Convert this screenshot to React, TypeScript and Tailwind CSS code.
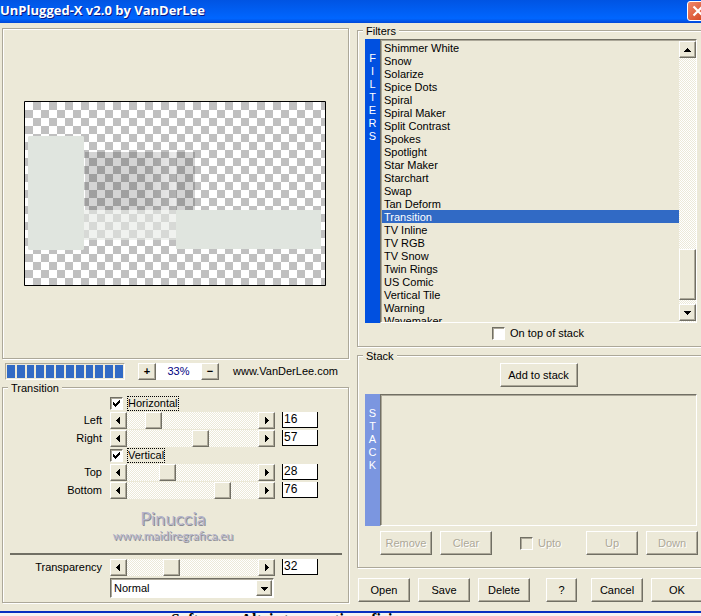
import { useState, type ReactNode } from "react";

const raised =
  "border border-t-white border-l-white border-r-[#716f64] border-b-[#716f64] shadow-[inset_-1px_-1px_0_#aca899] bg-[#ece9d8]";
const sunken =
  "border border-t-[#716f64] border-l-[#716f64] border-r-white border-b-white shadow-[inset_1px_1px_0_#aca899]";
const dither = "bg-[repeating-conic-gradient(#ffffff_0_25%,#ece9d8_0_50%)] bg-[length:2px_2px]";
const etched = "border border-[#aca899] shadow-[1px_1px_0_#fff,inset_1px_1px_0_#fff]";

const filters = [
  "Shimmer White", "Snow", "Solarize", "Spice Dots", "Spiral", "Spiral Maker", "Split Contrast",
  "Spokes", "Spotlight", "Star Maker", "Starchart", "Swap", "Tan Deform", "Transition", "TV Inline",
  "TV RGB", "TV Snow", "Twin Rings", "US Comic", "Vertical Tile", "Warning", "Wavemaker",
];

function Arrow({ dir }: { dir: "left" | "right" | "up" | "down" }) {
  const d = {
    left: "M6 1h-1v1h-1v1h-1v1h-1v1h1v1h1v1h1v1h1z",
    right: "M3 1h1v1h1v1h1v1h1v1h-1v1h-1v1h-1v1h-1z",
    up: "M4 3h1v1h1v1h1v1h1v1h-7v-1h1v-1h1v-1h1z",
    down: "M1 3h7v1h-1v1h-1v1h-1v1h-1v-1h-1v-1h-1v-1h-1z",
  }[dir];
  return (
    <svg viewBox="0 0 9 9" className="h-[9px] w-[9px]" shapeRendering="crispEdges" aria-hidden="true">
      <path d={d} fill="#000" />
    </svg>
  );
}

function Group({ title, className = "", children }: { title: string; className?: string; children: ReactNode }) {
  return (
    <fieldset className={`min-w-0 ${etched} ${className}`}>
      <legend className="ml-[5px] bg-[#ece9d8] px-[3px] pt-[3px] leading-[11px]">{title}</legend>
      {children}
    </fieldset>
  );
}

function Button({ children, className = "w-[52px]", disabled = false }: { children: ReactNode; className?: string; disabled?: boolean }) {
  return (
    <button
      type="button"
      disabled={disabled}
      className={`h-6 shrink-0 whitespace-nowrap ${raised} ${className} disabled:text-[#aca899] disabled:[text-shadow:1px_1px_0_#fff]`}
    >
      {children}
    </button>
  );
}

function Check({ label, initial = false, disabled = false, focus = false }: { label: string; initial?: boolean; disabled?: boolean; focus?: boolean }) {
  const [on, setOn] = useState(initial);
  return (
    <label className={`flex h-[13px] items-center gap-[5px] ${disabled ? "text-[#aca899] [text-shadow:1px_1px_0_#fff]" : ""}`}>
      <span className="grid h-[13px] w-[13px]">
        <input
          type="checkbox"
          checked={on}
          disabled={disabled}
          onChange={() => setOn(!on)}
          className={`col-start-1 row-start-1 h-[13px] w-[13px] appearance-none ${sunken} ${disabled ? "bg-[#ece9d8]" : "bg-white"}`}
        />
        {on && (
          <svg viewBox="0 0 13 13" className="pointer-events-none col-start-1 row-start-1 h-[13px] w-[13px]" shapeRendering="crispEdges" aria-hidden="true">
            <path d="M3 5h1v1h1v1h1v-1h1v-1h1v-1h1v-1h1v3h-1v1h-1v1h-1v1h-1v1h-1v-1h-1v-1h-1z" fill="#000" />
          </svg>
        )}
      </span>
      <span className={`leading-[13px] ${focus ? "outline-1 outline-dotted outline-black" : ""}`}>{label}</span>
    </label>
  );
}

function Slider({ label, initial }: { label: string; initial: number }) {
  const [value, setValue] = useState(initial);
  const set = (n: number) => setValue(Math.max(0, Math.min(100, n || 0)));
  const arrow = `flex h-[17px] w-[17px] items-center justify-center ${raised}`;
  return (
    <div className="flex h-[18px] items-start">
      <label htmlFor={label} className="w-[100px] pr-2 text-right leading-4">{label}</label>
      <div className="flex w-[165px]">
        <button type="button" aria-label={`Decrease ${label}`} className={arrow} onClick={() => set(value - 1)}>
          <Arrow dir="left" />
        </button>
        <input
          id={label}
          type="range"
          value={value}
          onChange={(e) => set(+e.target.value)}
          className={`h-[17px] min-w-0 flex-1 appearance-none ${dither} [&::-webkit-slider-thumb]:h-[17px] [&::-webkit-slider-thumb]:w-[17px] [&::-webkit-slider-thumb]:appearance-none [&::-webkit-slider-thumb]:border [&::-webkit-slider-thumb]:border-t-white [&::-webkit-slider-thumb]:border-r-[#716f64] [&::-webkit-slider-thumb]:border-b-[#716f64] [&::-webkit-slider-thumb]:border-l-white [&::-webkit-slider-thumb]:bg-[#ece9d8] [&::-webkit-slider-thumb]:shadow-[inset_-1px_-1px_0_#aca899]`}
        />
        <button type="button" aria-label={`Increase ${label}`} className={arrow} onClick={() => set(value + 1)}>
          <Arrow dir="right" />
        </button>
      </div>
      <input
        type="text"
        aria-label={`${label} value`}
        value={value}
        onChange={(e) => set(+e.target.value)}
        className="ml-[7px] h-4 w-9 border border-t-0 border-black bg-white px-px pb-px text-xs leading-none"
      />
    </div>
  );
}

function Preview() {
  return (
    <svg viewBox="0 0 302 185" className="h-[185px] w-[302px]" role="img" aria-label="Preview">
      <defs>
        <pattern id="checks" x="1" y="1" width="16" height="16" patternUnits="userSpaceOnUse">
          <path d="M0 0h16v16h-16z" fill="#fff" />
          <path d="M8 0h8v8h-8zM0 8h8v8h-8z" fill="#c0c0c0" />
        </pattern>
        <linearGradient id="shade">
          <stop offset="0" stopColor="#000" stopOpacity=".17" />
          <stop offset=".65" stopColor="#000" stopOpacity=".17" />
          <stop offset="1" stopColor="#000" stopOpacity=".08" />
        </linearGradient>
      </defs>
      <path d="M0 0h302v185h-302z" fill="url(#checks)" />
      <path d="M61 51h91v58h-91z" fill="url(#shade)" />
      <path d="M152 51h19v58h-19z" fill="#000" opacity=".17" />
      <path d="M60 109h93v30h-93z" fill="#e6eae5" opacity=".6" />
      <path d="M5 35h54l1 1v112l-1 1h-54l-1-1v-112z" fill="#e0e5df" />
      <path d="M152 109h145v39h-145z" fill="#e0e5df" />
      <path d="M.5 .5h301v184h-301z" fill="none" stroke="#000" />
    </svg>
  );
}

function Strip({ text, className }: { text: string; className: string }) {
  return (
    <div className={`flex w-[15px] shrink-0 flex-col items-center leading-[13px] text-white ${className}`}>
      {text.split("").map((c, i) => (
        <span key={i}>{c}</span>
      ))}
    </div>
  );
}

export default function App() {
  const [selected, setSelected] = useState("Transition");
  return (
    <div className="w-full overflow-hidden bg-[#ece9d8] font-['Liberation_Sans',Arial,sans-serif] text-[11px] leading-[13px] text-black">
      <header className="flex h-[23px] items-center justify-between bg-linear-to-b from-[#0054e3] via-[#0066ff] via-80% to-[#0048d8] pb-[2px]">
        <h1 className="font-['Open_Sans',sans-serif] text-[13px] font-bold text-white [text-shadow:1px_1px_0_#0a1883]">
          UnPlugged-X v2.0 by VanDerLee
        </h1>
        <button type="button" aria-label="Close" className="-mr-[7px] flex h-5 w-[21px] items-center justify-center rounded-[3px] border border-white bg-linear-to-br from-[#f0886a] to-[#d03c10]">
          <svg viewBox="0 0 12 12" className="h-3 w-3" aria-hidden="true">
            <path d="M1.500 1.500l9 9M10.500 1.500l-9 9" stroke="#fff" strokeWidth="2.200" />
          </svg>
        </button>
      </header>

      <main className="flex gap-2 pl-[2px]">
        <div className="flex w-[347px] shrink-0 flex-col pt-[5px]">
          <section className={`flex h-[331px] items-center justify-center pr-px ${etched}`}>
            <Preview />
          </section>

          <div className="flex h-[21px] items-start pt-1 pl-[3px]">
            <div role="progressbar" aria-label="Rendering" aria-valuenow={100} className="flex h-[17px] w-[120px] gap-[2px] border border-t-[#aca899] border-l-[#aca899] border-r-white border-b-white p-px">
              {Array.from({ length: 12 }, (_, i) => (
                <span key={i} className="min-w-0 flex-1 bg-[#316ac5]" />
              ))}
            </div>
            <div className="ml-[13px] flex h-[17px]">
              <button type="button" className={`w-[18px] font-bold ${raised}`}>+</button>
              <output className="w-[45px] bg-white text-center leading-4 text-[#000080]">33%</output>
              <button type="button" className={`w-[18px] font-bold ${raised}`}>−</button>
            </div>
            <a href="#site" className="ml-[14px] leading-4">www.VanDerLee.com</a>
          </div>

          <Group title="Transition">
            <div className="pt-[3px] pl-[7px]">
              <div className="pl-[100px]"><Check label="Horizontal" initial focus /></div>
              <div className="mt-[2px]">
                <Slider label="Left" initial={16} />
                <Slider label="Right" initial={57} />
              </div>
              <div className="mt-px pl-[100px]"><Check label="Vertical" initial focus /></div>
              <div className="mt-[2px]">
                <Slider label="Top" initial={28} />
                <Slider label="Bottom" initial={76} />
              </div>
              <div className="flex h-[53px] flex-col items-center pt-2 pr-3 text-[#b4b4cc] [text-shadow:1px_1px_0_#8c8c94]">
                <span className="font-['Lato',sans-serif] text-lg leading-5">Pinuccia</span>
                <span className="font-['Lato',sans-serif] text-xs leading-4">www.maidiregrafica.eu</span>
              </div>
              <hr className="mr-[6px] mb-1 border-t-2 border-[#716f64]" />
              <Slider label="Transparency" initial={32} />
              <div className="mt-px mb-1 ml-[100px] grid w-[164px]">
                <select aria-label="Blend mode" defaultValue="Normal" className={`col-start-1 row-start-1 h-5 appearance-none bg-white pl-[3px] ${sunken}`}>
                  <option>Normal</option>
                </select>
                <span className={`pointer-events-none col-start-1 row-start-1 m-[2px] flex w-4 items-center justify-center justify-self-end ${raised}`}>
                  <Arrow dir="down" />
                </span>
              </div>
            </div>
          </Group>
        </div>

        <div className="-mr-3 flex min-w-0 flex-1 flex-col">
          <Group title="Filters">
            <div className="flex h-[286px] pr-[15px] pl-[7px] pt-[2px]">
              <Strip text="FILTERS" className="bg-[#0050e0] pt-[13px]" />
              <div className={`flex min-w-0 flex-1 overflow-hidden pt-px ${sunken}`}>
                <ul role="listbox" aria-label="Filters" className="min-w-0 flex-1 overflow-hidden pl-px">
                  {filters.map((f) => (
                    <li key={f} role="option" aria-selected={f === selected}>
                      <button
                        type="button"
                        onClick={() => setSelected(f)}
                        className={`block h-[13px] w-full pt-px pl-[2px] text-left leading-3 ${f === selected ? "bg-[#316ac5] text-white" : ""}`}
                      >
                        {f}
                      </button>
                    </li>
                  ))}
                </ul>
                <div className={`flex w-[17px] shrink-0 flex-col pb-px ${dither}`}>
                  <button type="button" aria-label="Scroll up" className={`flex h-[17px] items-center justify-center ${raised}`}>
                    <Arrow dir="up" />
                  </button>
                  <div className={`mt-auto mb-1 h-[51px] ${raised}`} />
                  <button type="button" aria-label="Scroll down" className={`flex h-[17px] items-center justify-center ${raised}`}>
                    <Arrow dir="down" />
                  </button>
                </div>
              </div>
            </div>
            <div className="flex justify-center pt-1 pl-[6px] pb-[6px]">
              <Check label="On top of stack" />
            </div>
          </Group>

          <Group title="Stack" className="mt-px">
            <div className="flex justify-center pt-px pb-[7px] pl-[7px]">
              <Button className="w-[78px]">Add to stack</Button>
            </div>
            <div className="flex h-[132px] pr-[15px] pl-[7px]">
              <Strip text="STACK" className="bg-[#7b96e0] pt-[13px]" />
              <ul role="listbox" aria-label="Stack" className={`min-w-0 flex-1 ${sunken}`} />
            </div>
            <div className="flex items-center pt-[5px] pr-[14px] pb-3 pl-[22px]">
              <Button disabled>Remove</Button>
              <Button disabled className="ml-2 w-[52px]">Clear</Button>
              <div className="ml-7"><Check label="Upto" disabled /></div>
              <div className="ml-auto flex gap-2">
                <Button disabled>Up</Button>
                <Button disabled>Down</Button>
              </div>
            </div>
          </Group>

          <div className="flex gap-2 pt-[10px] pb-[9px] pl-px">
            <Button>Open</Button>
            <Button>Save</Button>
            <Button>Delete</Button>
            <Button className="ml-2 w-[31px]">?</Button>
            <Button className="ml-[6px] w-[52px]">Cancel</Button>
            <Button>OK</Button>
          </div>
        </div>
      </main>

      <footer className="h-[5px] overflow-hidden border-t-2 border-[#0831c0] bg-[#f4f4f4]">
        <p className="pl-[171px] font-['Liberation_Serif',serif] text-base leading-[13px] font-bold">Software: Altri strumenti grafici</p>
      </footer>
    </div>
  );
}
